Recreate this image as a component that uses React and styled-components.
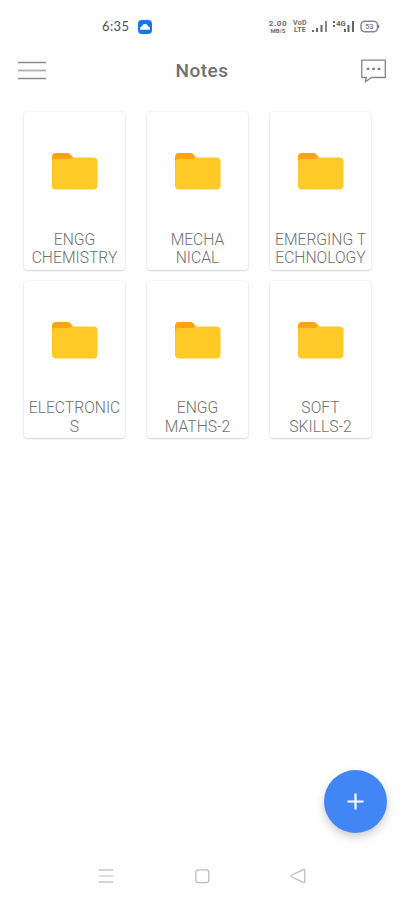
import React from "react";
import styled, { createGlobalStyle } from "styled-components";

const GlobalStyle = createGlobalStyle`
  * { box-sizing: border-box; }
  body { margin: 0; background: #fefefe; }
`;

const Screen = styled.main`
  position: relative;
  width: 404px;
  height: 900px;
  overflow: hidden;
  display: flex;
  flex-direction: column;
  background: #fefefe;
  font-family: Roboto, "Liberation Sans", sans-serif;
`;

const StatusBar = styled.div`
  height: 50px;
  flex: none;
  display: flex;
  align-items: flex-start;
  justify-content: space-between;
  padding: 18px 24px 0 102px;
`;

const Clock = styled.div`
  display: flex;
  align-items: center;
  gap: 9px;
  height: 17px;
  font: 400 13px/17px Lato, sans-serif;
  letter-spacing: 0.35px;
  color: #505050;
`;

const Indicators = styled.div`
  display: flex;
  align-items: center;
  gap: 4px;
  height: 17px;
`;

const TinyStack = styled.div`
  display: flex;
  flex-direction: column;
  width: ${(p) => p.$width}px;
  font-weight: 700;
  line-height: 7px;
  text-align: center;
  white-space: nowrap;
  color: #6c6c6c;
`;

const TinyLine = styled.span`
  font-size: ${(p) => p.$size}px;
  letter-spacing: ${(p) => p.$spacing || 0}px;
`;

const Header = styled.header`
  height: 42px;
  flex: none;
  display: grid;
  grid-template-columns: 50px 1fr 50px;
  align-items: center;
  padding: 0 17px;
`;

const Title = styled.h1`
  margin: 0;
  text-align: center;
  font-size: 19px;
  line-height: 24px;
  font-weight: 500;
  letter-spacing: 0.45px;
  color: #707070;
`;

const IconButton = styled.button`
  display: flex;
  justify-content: ${(p) => (p.$end ? "flex-end" : "flex-start")};
  padding: 0;
  border: 0;
  background: none;
`;

const Grid = styled.section`
  display: grid;
  grid-template-columns: repeat(3, 101px);
  grid-auto-rows: 157.5px;
  column-gap: 22px;
  row-gap: 11px;
  padding: 20px 0 0 24px;
`;

const Card = styled.article`
  display: flex;
  flex-direction: column;
  align-items: center;
  padding-top: 40px;
  border-radius: 3px;
  background: #fefefe;
  box-shadow: 0 1px 2px rgba(0, 0, 0, 0.13), 0 0 3px rgba(0, 0, 0, 0.08);
`;

const Label = styled.div`
  margin-top: 40.8px;
  font-size: 15.7px;
  line-height: 18.3px;
  font-weight: 300;
  text-align: center;
  white-space: pre;
  color: #707070;
`;

const AddButton = styled.button`
  position: absolute;
  left: 324px;
  top: 770px;
  width: 63px;
  height: 63px;
  display: flex;
  align-items: center;
  justify-content: center;
  padding: 0;
  border: 0;
  border-radius: 50%;
  background: #4285f4;
  box-shadow: 0 4px 8px rgba(0, 0, 0, 0.2);
`;

const NavBar = styled.nav`
  margin-top: auto;
  height: 48px;
  display: flex;
  align-items: center;
  justify-content: space-between;
  padding: 0 97px;
`;

const FolderIcon = () => (
  <svg width="46" height="38" viewBox="0 0 46 38">
    <path d="M0 16V5Q0 1 4 1H15.5Q17.2 1 18.2 2.2L21.5 6V16Z" fill="#ffa411" />
    <path d="M0 10Q0 7 3.5 7H17.5Q19.5 5.6 21 5.6H41.5Q45.5 5.6 45.5 9.5V33.5Q45.5 37.5 41.5 37.5H4Q0 37.5 0 33.5Z" fill="#ffc928" />
  </svg>
);

const Signal = () => (
  <svg width="17" height="13" viewBox="0 0 17 13" fill="#666">
    <path d="M0 10h2v2H0zM4 8h2v4H4zM8.5 5h2v7h-2z" />
    <path d="M13 1h2v11h-2z" fill="#888" />
  </svg>
);

const MobileSignal = () => (
  <svg width="23" height="13" viewBox="0 0 23 13" fill="#666">
    <path d="M0 1h2v2H0zM0 5h2v2H0zM11 9h2v3h-2zM14.5 5h2v7h-2zM19 1h2v11h-2z" />
    <text x="3.2" y="6.4" fontFamily="Roboto" fontSize="7.5" fontWeight="700">4G</text>
  </svg>
);

const Battery = () => (
  <svg width="20" height="13" viewBox="0 0 20 13">
    <rect x="1" y="1.2" width="16.5" height="10.6" rx="4" fill="none" stroke="#888" strokeWidth="1.5" />
    <path d="M18 5q1.5 1.5 0 3" fill="none" stroke="#888" strokeWidth="1.5" />
    <text x="9.2" y="9.1" textAnchor="middle" fontFamily="Roboto" fontSize="7.5" fontWeight="500" fill="#777">53</text>
  </svg>
);

const folders = [
  "ENGG\nCHEMISTRY",
  "MECHA\nNICAL",
  "EMERGING T\nECHNOLOGY",
  "ELECTRONIC\nS",
  "ENGG\nMATHS-2",
  "SOFT\nSKILLS-2",
];

export default function App() {
  return (
    <>
      <GlobalStyle />
      <Screen>
        <StatusBar>
          <Clock>
            6:35
            <svg width="14" height="14" viewBox="0 0 14 14">
              <rect width="14" height="14" rx="4" fill="#1477f2" />
              <path d="M2.5 9.8Q2 9.8 2 8.6Q2 6.5 4 6.2Q4.5 4 7 4Q9.5 4 10 6.2Q12 6.5 12 8.6Q12 9.8 11.5 9.8Z" fill="#fff" />
            </svg>
          </Clock>
          <Indicators>
            <TinyStack $width={20}>
              <TinyLine $size={8} $spacing={0.6}>2.00</TinyLine>
              <TinyLine $size={6}>MB/S</TinyLine>
            </TinyStack>
            <TinyStack $width={16}>
              <TinyLine $size={7} $spacing={0.3}>VoD</TinyLine>
              <TinyLine $size={7} $spacing={0.3}>LTE</TinyLine>
            </TinyStack>
            <Signal />
            <MobileSignal />
            <Battery />
          </Indicators>
        </StatusBar>
        <Header>
          <IconButton aria-label="Menu">
            <svg width="30" height="20" viewBox="0 0 30 20" fill="none" strokeWidth="1.5">
              <path d="M1 1.5H29M1 17.5H29" stroke="#8c8c8c" />
              <path d="M1 9.5H29" stroke="#b0b0b0" strokeWidth="1.8" />
            </svg>
          </IconButton>
          <Title>Notes</Title>
          <IconButton aria-label="Messages" $end>
            <svg width="27" height="26" viewBox="0 0 27 26">
              <path d="M1.8 2.2H25.3V19.5H11.5L5.3 23.8L6.3 19.5H1.8Z" fill="none" stroke="#858585" strokeWidth="1.3" strokeLinejoin="round" />
              <path d="M6.8 9.8h2.5v2.3H6.8zM12.3 9.8h2.5v2.3h-2.5zM17.8 9.8h2.5v2.3h-2.5z" fill="#777" />
            </svg>
          </IconButton>
        </Header>
        <Grid>
          {folders.map((name) => (
            <Card key={name}>
              <FolderIcon />
              <Label>{name}</Label>
            </Card>
          ))}
        </Grid>
        <AddButton aria-label="Add note">
          <svg width="17" height="17" viewBox="0 0 17 17">
            <path d="M8.5 0.5V16.5M0.5 8.5H16.5" stroke="#fff" strokeWidth="2.2" />
          </svg>
        </AddButton>
        <NavBar>
          <svg width="18" height="16" viewBox="0 0 18 16" fill="none">
            <path d="M1.5 2H16.5M1.5 14H16.5" stroke="#c8c8c8" strokeWidth="1.4" />
            <path d="M1.5 8H16.5" stroke="#d8d8d8" strokeWidth="1.6" />
          </svg>
          <svg width="16" height="16" viewBox="0 0 16 16">
            <rect x="1.8" y="1.8" width="13" height="12.8" rx="2.5" fill="none" stroke="#bdbdbd" strokeWidth="1.3" />
          </svg>
          <svg width="18" height="16" viewBox="0 0 18 16">
            <path d="M13.8 1.8Q15.8 0.8 15.8 3V13Q15.8 15.2 13.8 14.2L3 9Q1.2 8 3 7Z" fill="none" stroke="#bdbdbd" strokeWidth="1.3" />
          </svg>
        </NavBar>
      </Screen>
    </>
  );
}
